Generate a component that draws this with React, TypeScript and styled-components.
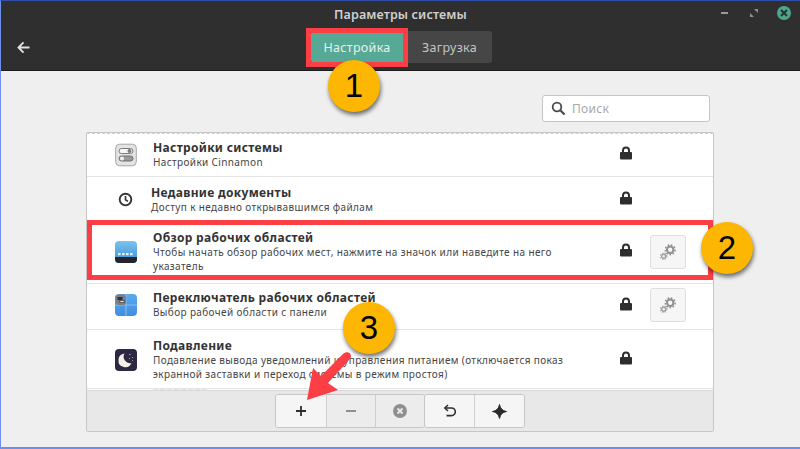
import React from "react";
import styled, { createGlobalStyle } from "styled-components";

const Global = createGlobalStyle`
  html, body { margin: 0; padding: 0; width: 800px; height: 449px; overflow: hidden; background: #efefef; }
  #root { width: 800px; height: 449px; }
  * { box-sizing: border-box; }
`;

const Page = styled.div`
  position: relative;
  width: 800px;
  height: 449px;
  overflow: hidden;
  display: flex;
  flex-direction: column;
  background: #efefef;
  border-top: 1px solid #2f4fa8;
  border-left: 1px solid #6d90ee;
  border-bottom: 2px solid #6d90ee;
  font-family: "Noto Sans", "Open Sans", sans-serif;
  color: #333;
`;

const Header = styled.header`
  height: 70px;
  flex: none;
  background: #2f2f2f;
  border-bottom: 1px solid #1c1c1c;
  color: #dcdcdc;
  display: flex;
  flex-direction: column;
`;

const TitleBar = styled.div`
  height: 29px;
  flex: none;
  display: flex;
  align-items: center;
  justify-content: center;
  position: relative;
  padding-bottom: 3px;
  font-size: 12.5px;
  font-weight: 600;
  letter-spacing: 0.12px;
  color: #cfcfcf;
`;

const WindowControls = styled.div`
  position: absolute;
  right: 9px;
  top: 5px;
  display: flex;
  align-items: center;
  gap: 18px;
`;

const Close = styled.div`
  width: 14px;
  height: 14px;
  border-radius: 50%;
  background: #4fa68f;
  display: flex;
  align-items: center;
  justify-content: center;
`;

const ToolRow = styled.div`
  flex: 1;
  display: grid;
  grid-template-columns: 310px auto 1fr;
  align-items: start;
`;

const Back = styled.div`
  padding: 11px 0 0 16px;
  display: flex;
`;

const Tabs = styled.div`
  display: flex;
  margin-top: 1px;
`;

const Tab = styled.div<{ $active?: boolean }>`
  height: 32px;
  width: ${(p) => (p.$active ? "92px" : "89px")};
  padding-left: ${(p) => (p.$active ? "0" : "4px")};
  display: flex;
  align-items: center;
  justify-content: center;
  font-size: 12.5px;
  letter-spacing: 0.32px;
  border-radius: ${(p) => (p.$active ? "3px 0 0 3px" : "0 3px 3px 0")};
  background: ${(p) => (p.$active ? "#56a995" : "#464646")};
  color: ${(p) => (p.$active ? "#e6f2ee" : "#c4c4c4")};
`;

const Body = styled.main`
  flex: 1;
  display: flex;
  flex-direction: column;
  padding: 24px 86px 0 85px;
`;

const SearchRow = styled.div`
  display: flex;
  justify-content: flex-end;
  height: 37px;
  padding-right: 4px;
`;

const Search = styled.div`
  width: 168px;
  height: 27px;
  background: #fff;
  border: 1px solid #c4c4c4;
  border-radius: 3px;
  display: flex;
  align-items: center;
  gap: 6px;
  padding: 0 8px;
  font-size: 12px;
  letter-spacing: 0.3px;
  color: #a8a8a8;
`;

const Panel = styled.section`
  height: 300px;
  width: 628px;
  border: 1px solid #c6c6c6;
  border-radius: 2px;
  display: flex;
  flex-direction: column;
  background: #fff;
  overflow: hidden;
`;

const List = styled.div`
  flex: 1;
  min-height: 0;
  display: flex;
  flex-direction: column;
  border-top: 1px dashed #cfcfcf;
  overflow: hidden;
`;

const Row = styled.div<{ $h: number; $pb: number; $pt: number }>`
  height: ${(p) => p.$h}px;
  padding: ${(p) => p.$pt}px 0 ${(p) => p.$pb}px;
  flex: none;
  display: grid;
  grid-template-columns: 66px 1fr 50px 64px;
  align-items: center;
  border-bottom: 1px solid #e4e4e4;
`;

const Peek = styled.div`
  flex: none;
  height: 2px;
  width: 54px;
  margin-left: 66px;
  background: repeating-linear-gradient(90deg, #e6e6e6 0 5px, #f8f8f8 5px 7px);
`;

const IconCell = styled.div`
  display: flex;
  justify-content: center;
  padding-left: 11px;
`;

const TextCell = styled.div<{ $shift?: number }>`
  margin-left: ${(p) => p.$shift ?? 0}px;
  display: flex;
  flex-direction: column;
`;

const Name = styled.div`
  font-size: 12px;
  font-weight: 700;
  line-height: 15px;
  letter-spacing: 0.32px;
  color: #333;
  white-space: nowrap;
`;

const Desc = styled.div`
  font-size: 10px;
  line-height: 14.5px;
  letter-spacing: 0.37px;
  color: #454545;
  white-space: pre-line;
`;

const LockCell = styled.div`
  display: flex;
  justify-content: center;
  padding-left: 4px;
  padding-bottom: 3px;
`;

const GearCell = styled.div`
  display: flex;
  justify-content: flex-start;
  padding-left: 1px;
`;

const GearButton = styled.div`
  width: 36px;
  height: 34px;
  background: #f6f6f6;
  border: 1px solid #dedede;
  border-radius: 3px;
  display: flex;
  align-items: center;
  justify-content: center;
`;

const Toolbar = styled.div`
  height: 41px;
  flex: none;
  background: #e8e8e8;
  border-top: 1px solid #d8d8d8;
  display: flex;
  justify-content: center;
  padding-top: 3px;
`;

const ToolGroup = styled.div`
  display: flex;
  height: 34px;
  border: 1px solid #c6c6c6;
  border-radius: 3px;
  overflow: hidden;
  & + & { margin-left: -1px; }
`;

const ToolBtn = styled.div<{ $on?: boolean }>`
  width: 49.3px;
  display: flex;
  align-items: center;
  justify-content: center;
  background: ${(p) => (p.$on ? "#f5f5f5" : "#ececec")};
  & + & { border-left: 1px solid #cfcfcf; }
`;

const Callout = styled.div<{ $x: number; $y: number; $w: number; $h: number }>`
  position: absolute;
  left: ${(p) => p.$x}px;
  top: ${(p) => p.$y}px;
  width: ${(p) => p.$w}px;
  height: ${(p) => p.$h}px;
  border: 5px solid #fb3f44;
  pointer-events: none;
`;

const Badge = styled.div<{ $x: number; $y: number }>`
  position: absolute;
  left: ${(p) => p.$x}px;
  top: ${(p) => p.$y}px;
  width: 52px;
  height: 52px;
  border-radius: 50%;
  background: #fdb702;
  box-shadow: 1px 3px 4px rgba(0, 0, 0, 0.55);
  display: flex;
  align-items: center;
  justify-content: center;
  font-family: "Liberation Sans", Arial, sans-serif;
  font-size: 33px;
  color: #000;
`;

const ArrowLayer = styled.svg`
  position: absolute;
  left: 300px;
  top: 345px;
`;

const Lock = () => (
  <svg width="14" height="14" viewBox="0 0 14 14">
    <path d="M3 6.5V4.4a4 4 0 0 1 8 0v2.1H9V4.4a2 2 0 0 0-4 0v2.1z" fill="#2e2e2e" />
    <rect x="1" y="6" width="12" height="7.6" rx="1" fill="#2e2e2e" />
  </svg>
);

const Gears = () => (
  <svg width="18" height="18" viewBox="0 0 18 18">
    <circle cx="11.2" cy="6.8" r="3.2" fill="none" stroke="#8f8f8f" strokeWidth="2" />
    <circle cx="11.2" cy="6.8" r="4.9" fill="none" stroke="#8f8f8f" strokeWidth="1.4" strokeDasharray="1.7 1.6" />
    <circle cx="4.7" cy="13.2" r="2" fill="none" stroke="#a0a0a0" strokeWidth="1.4" />
    <circle cx="4.7" cy="13.2" r="3.2" fill="none" stroke="#a0a0a0" strokeWidth="1.1" strokeDasharray="1.3 1.3" />
  </svg>
);

const SettingsIcon = () => (
  <svg width="22" height="24" viewBox="0 0 22 24">
    <rect x="0.7" y="1.2" width="20.6" height="21.6" rx="4" fill="#e4e4e4" stroke="#a5a5a5" />
    <rect x="4" y="5.5" width="14" height="5" rx="2.5" fill="#f6f6f6" stroke="#7c7c7c" />
    <circle cx="14.5" cy="8" r="2" fill="#7c7c7c" />
    <rect x="4" y="13" width="14" height="5" rx="2.5" fill="#9a9a9a" stroke="#6f6f6f" />
    <circle cx="7" cy="15.5" r="2.1" fill="#eee" />
  </svg>
);

const ClockIcon = () => (
  <svg width="15" height="15" viewBox="0 0 16 16">
    <circle cx="8" cy="8" r="6.2" fill="none" stroke="#333" strokeWidth="2" />
    <path d="M8 4.2V8.3L10.6 10" fill="none" stroke="#333" strokeWidth="1.7" />
  </svg>
);

const ExpoIcon = () => (
  <svg width="22" height="22" viewBox="0 0 22 22">
    <defs>
      <linearGradient id="expo" x1="0" y1="0" x2="0" y2="1">
        <stop offset="0" stopColor="#7cc3ee" />
        <stop offset="1" stopColor="#3a8ed6" />
      </linearGradient>
    </defs>
    <rect x="0" y="0" width="22" height="22" rx="4" fill="url(#expo)" />
    <path d="M0 16h22v2a4 4 0 0 1-4 4H4a4 4 0 0 1-4-4z" fill="#22262c" />
    <g fill="#e4f1fb">
      <rect x="3" y="12" width="2.6" height="2.2" />
      <rect x="7" y="12" width="2.6" height="2.2" />
      <rect x="11" y="12" width="2.6" height="2.2" />
      <rect x="15" y="12" width="2.6" height="2.2" />
    </g>
  </svg>
);

const SwitcherIcon = () => (
  <svg width="22" height="22" viewBox="0 0 22 22">
    <defs>
      <linearGradient id="switcher" x1="0" y1="0" x2="0" y2="1">
        <stop offset="0" stopColor="#5aa8ee" />
        <stop offset="1" stopColor="#3f8fe0" />
      </linearGradient>
    </defs>
    <rect x="0" y="0" width="22" height="22" rx="4" fill="url(#switcher)" />
    <path d="M11 0v22M0 11h22" stroke="#8cc0f0" strokeWidth="1" />
    <rect x="0.5" y="0.5" width="10.5" height="10.5" rx="3" fill="#7b7f84" />
    <rect x="2.5" y="3" width="5" height="3" fill="#2f3338" />
    <rect x="4.5" y="6" width="5" height="3" fill="#3b3f44" />
    <rect x="5.3" y="6.8" width="3.4" height="1.4" fill="#e8e8e8" />
  </svg>
);

const MoonIcon = () => (
  <svg width="22" height="22" viewBox="0 0 22 22">
    <rect x="0" y="0" width="22" height="22" rx="4" fill="#2d2742" />
    <path d="M9.5 4.6a6.8 6.8 0 1 0 7 9.4A6.4 6.4 0 0 1 9.5 4.6z" fill="#f3f0e6" />
    <g fill="#b9b5c9">
      <circle cx="15" cy="5.5" r="0.7" />
      <circle cx="17.5" cy="8.5" r="0.6" />
      <circle cx="14.5" cy="9.5" r="0.6" />
      <circle cx="17.5" cy="11.5" r="0.5" />
    </g>
  </svg>
);

const items = [
  {
    h: 43,
    pb: 1,
    pt: 0,
    icon: <SettingsIcon />,
    name: "Настройки системы",
    desc: "Настройки Cinnamon",
  },
  {
    h: 45,
    pb: 0,
    pt: 1,
    shift: -2,
    icon: <ClockIcon />,
    name: "Недавние документы",
    desc: "Доступ к недавно открывавшимся файлам",
  },
  {
    h: 62,
    pb: 2,
    pt: 0,
    icon: <ExpoIcon />,
    gear: true,
    name: "Обзор рабочих областей",
    desc: "Чтобы начать обзор рабочих мест, нажмите на значок или наведите на него\nуказатель",
  },
  {
    h: 46,
    pb: 3,
    pt: 0,
    icon: <SwitcherIcon />,
    gear: true,
    name: "Переключатель рабочих областей",
    desc: "Выбор рабочей области с панели",
  },
  {
    h: 59,
    pb: 0,
    pt: 1,
    icon: <MoonIcon />,
    name: "Подавление",
    desc: "Подавление вывода уведомлений и управления питанием (отключается показ\nэкранной заставки и переход системы в режим простоя)",
  },
];

export default function App() {
  return (
    <Page>
      <Global />
      <Header>
        <TitleBar>
          Параметры системы
          <WindowControls>
            <svg width="10" height="10" viewBox="0 0 10 10">
              <path d="M0 5h7" stroke="#9a9a9a" strokeWidth="2" />
            </svg>
            <svg width="10" height="10" viewBox="0 0 10 10">
              <path d="M5 1h4v4zM5 9H1V5z" fill="#8f8f8f" />
            </svg>
            <Close>
              <svg width="8" height="8" viewBox="0 0 8 8">
                <path d="M1 1l6 6M7 1L1 7" stroke="#23302d" strokeWidth="1.8" />
              </svg>
            </Close>
          </WindowControls>
        </TitleBar>
        <ToolRow>
          <Back>
            <svg width="13" height="13" viewBox="0 0 14 14">
              <path d="M7 1.5L1.6 7 7 12.5M1.6 7H13.5" fill="none" stroke="#e2e2e2" strokeWidth="2" />
            </svg>
          </Back>
          <Tabs>
            <Tab $active>Настройка</Tab>
            <Tab>Загрузка</Tab>
          </Tabs>
        </ToolRow>
      </Header>
      <Body>
        <SearchRow>
          <Search>
            <svg width="15" height="15" viewBox="0 0 15 15">
              <circle cx="6" cy="6" r="4.3" fill="none" stroke="#4a4a4a" strokeWidth="1.8" />
              <path d="M9.3 9.3L13.5 13.5" stroke="#4a4a4a" strokeWidth="2.2" />
            </svg>
            Поиск
          </Search>
        </SearchRow>
        <Panel>
          <List>
            {items.map((it) => (
              <Row key={it.name} $h={it.h} $pb={it.pb} $pt={it.pt}>
                <IconCell>{it.icon}</IconCell>
                <TextCell $shift={it.shift}>
                  <Name>{it.name}</Name>
                  <Desc>{it.desc}</Desc>
                </TextCell>
                <LockCell>
                  <Lock />
                </LockCell>
                <GearCell>
                  {it.gear && (
                    <GearButton>
                      <Gears />
                    </GearButton>
                  )}
                </GearCell>
              </Row>
            ))}
            <Peek />
          </List>
          <Toolbar>
            <ToolGroup>
              <ToolBtn $on>
                <svg width="12" height="12" viewBox="0 0 12 12">
                  <path d="M6 1v10M1 6h10" stroke="#2e2e2e" strokeWidth="1.8" />
                </svg>
              </ToolBtn>
              <ToolBtn>
                <svg width="12" height="12" viewBox="0 0 12 12">
                  <path d="M1 6h10" stroke="#8f8f8f" strokeWidth="1.8" />
                </svg>
              </ToolBtn>
              <ToolBtn>
                <svg width="16" height="16" viewBox="0 0 16 16">
                  <circle cx="8" cy="8" r="7" fill="#8f8f8f" />
                  <path d="M5.5 5.5l5 5M10.5 5.5l-5 5" stroke="#ececec" strokeWidth="1.8" />
                </svg>
              </ToolBtn>
            </ToolGroup>
            <ToolGroup>
              <ToolBtn $on>
                <svg width="14" height="14" viewBox="0 0 14 14">
                  <path d="M5 1L1.8 4 5 7" fill="none" stroke="#2e2e2e" strokeWidth="1.5" />
                  <path d="M2.2 4H8.5a3.7 3.7 0 0 1 0 7.6H3.5" fill="none" stroke="#2e2e2e" strokeWidth="1.6" />
                </svg>
              </ToolBtn>
              <ToolBtn $on>
                <svg width="15" height="15" viewBox="0 0 15 15">
                  <path d="M7.5 0.5C8.2 4.5 10.5 6.8 14.5 7.5 10.5 8.2 8.2 10.5 7.5 14.5 6.8 10.5 4.5 8.2 0.5 7.5 4.5 6.8 6.8 4.5 7.5 0.5z" fill="#2a2a2a" stroke="#2a2a2a" />
                </svg>
              </ToolBtn>
            </ToolGroup>
          </Toolbar>
        </Panel>
      </Body>

      <Callout $x={305} $y={27} $w={102} $h={39} />
      <Callout $x={86} $y={219} $w={626} $h={60} />
      <Badge $x={327} $y={59}>1</Badge>
      <Badge $x={700} $y={221}>2</Badge>
      <ArrowLayer width="60" height="60" viewBox="0 0 60 60">
        <path
          d="M6 54 L12 22 L20 30 L42 8 C45 5 50 6 50 10 C50 12 49 13 48 14 L27 37 L37 44 Z"
          fill="#fb3f44"
        />
      </ArrowLayer>
      <Badge $x={342} $y={301}>3</Badge>
    </Page>
  );
}
